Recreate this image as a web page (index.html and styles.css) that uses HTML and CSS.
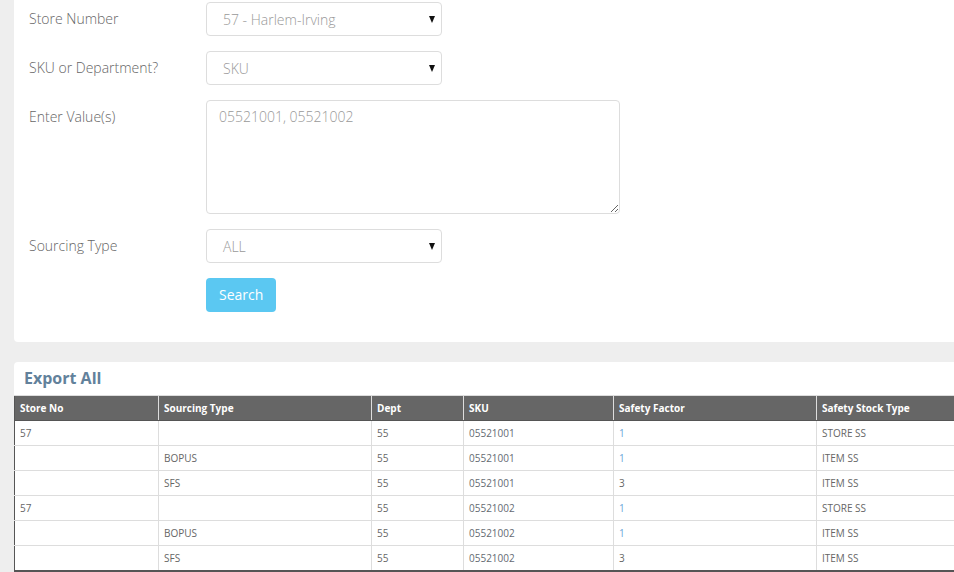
FILE: index.html
```html
<!DOCTYPE html>
<html>
<head>
<meta charset="utf-8">
<link rel="stylesheet" href="styles.css">
</head>
<body>
<div class="page">
  <section class="card form-card">
    <div class="form-row">
      <label class="label">Store Number</label>
      <div class="select"><span>57 - Harlem-Irving</span><span class="caret"></span></div>
    </div>
    <div class="form-row">
      <label class="label">SKU or Department?</label>
      <div class="select"><span>SKU</span><span class="caret"></span></div>
    </div>
    <div class="form-row">
      <label class="label">Enter Value(s)</label>
      <textarea class="textarea" placeholder="05521001, 05521002"></textarea>
    </div>
    <div class="form-row">
      <label class="label">Sourcing Type</label>
      <div class="select"><span>ALL</span><span class="caret"></span></div>
    </div>
    <div class="form-row">
      <span class="label"></span>
      <button class="btn">Search</button>
    </div>
  </section>
  <section class="card table-card">
    <h2 class="export">Export All</h2>
    <table class="grid">
      <colgroup>
        <col class="c1"><col class="c2"><col class="c3"><col class="c4"><col class="c5"><col class="c6">
      </colgroup>
      <thead>
        <tr><th>Store No</th><th>Sourcing Type</th><th>Dept</th><th>SKU</th><th>Safety Factor</th><th>Safety Stock Type</th></tr>
      </thead>
      <tbody>
        <tr><td>57</td><td></td><td>55</td><td class="sku">05521001</td><td class="num">1</td><td>STORE SS</td></tr>
        <tr><td></td><td>BOPUS</td><td>55</td><td class="sku">05521001</td><td class="num">1</td><td>ITEM SS</td></tr>
        <tr><td></td><td>SFS</td><td>55</td><td class="sku">05521001</td><td>3</td><td>ITEM SS</td></tr>
        <tr><td>57</td><td></td><td>55</td><td class="sku">05521002</td><td class="num">1</td><td>STORE SS</td></tr>
        <tr><td></td><td>BOPUS</td><td>55</td><td class="sku">05521002</td><td class="num">1</td><td>ITEM SS</td></tr>
        <tr><td></td><td>SFS</td><td>55</td><td class="sku">05521002</td><td>3</td><td>ITEM SS</td></tr>
      </tbody>
    </table>
  </section>
</div>
</body>
</html>
```
FILE: styles.css
```css
html, body {
  margin: 0;
  padding: 0;
  background: #eeeeee;
  overflow: hidden;
  font-family: "Open Sans", "Liberation Sans", sans-serif;
}
.page {
  width: 1000px;
  padding-left: 14px;
}
.card {
  background: #ffffff;
}
.form-card {
  border-radius: 0 0 4px 4px;
  padding: 2px 0 30px 15px;
  display: flex;
  flex-direction: column;
  gap: 15px;
}
.form-row {
  display: flex;
  align-items: flex-start;
}
.label {
  width: 177px;
  flex: none;
  font-size: 14px;
  font-weight: 300;
  line-height: 34px;
  color: #666666;
}
.select {
  width: 236px;
  height: 34px;
  box-sizing: border-box;
  border: 1px solid #dddddd;
  border-radius: 4px;
  display: flex;
  align-items: center;
  justify-content: space-between;
  padding: 0 6px 0 16px;
  font-size: 14px;
  font-weight: 300;
  color: #999999;
}
.caret {
  width: 0;
  height: 0;
  border-left: 3.5px solid transparent;
  border-right: 3.5px solid transparent;
  border-top: 7px solid #111111;
}
.textarea {
  width: 414px;
  height: 114px;
  box-sizing: border-box;
  border: 1px solid #dddddd;
  border-radius: 4px;
  padding: 6px 12px;
  font-family: "Open Sans", "Liberation Sans", sans-serif;
  font-size: 14px;
  font-weight: 300;
  line-height: 20px;
  color: #999999;
  margin: 0;
  outline: none;
}
.textarea::placeholder {
  color: #999999;
}
.btn {
  height: 34px;
  padding: 0 13px 1px;
  border: none;
  border-radius: 4px;
  background: #5bc8f2;
  color: #ffffff;
  font-family: "Open Sans", "Liberation Sans", sans-serif;
  font-size: 14px;
}
.table-card {
  margin-top: 20px;
  border-radius: 4px 4px 0 0;
  padding-top: 4px;
}
.export {
  margin: 0;
  padding-left: 10px;
  font-size: 16px;
  line-height: 24px;
  height: 29px;
  font-weight: 700;
  color: #62819b;
}
.grid {
  width: 987px;
  border-collapse: collapse;
  table-layout: fixed;
  font-size: 10px;
  border-left: 1px solid #555555;
  border-bottom: 2px solid #555555;
}
.c1 { width: 144px; }
.c2 { width: 213px; }
.c3 { width: 92px; }
.c4 { width: 150px; }
.c5 { width: 203px; }
.c6 { width: 185px; }
.grid th {
  background: #666666;
  color: #ffffff;
  font-weight: 700;
  text-align: left;
  height: 24px;
  padding: 0 5px;
  border-top: 1px solid #dddddd;
  border-left: 1px solid #dddddd;
  border-bottom: 1px solid #555555;
}
.grid th:first-child {
  border-left: none;
}
.grid td {
  height: 24px;
  padding: 0 5px;
  color: #666666;
  border-left: 1px solid #dddddd;
  border-top: 1px solid #dddddd;
}
.grid td:first-child {
  border-left: none;
}
.grid tbody tr:first-child td {
  border-top: none;
}
.grid td.sku {
  color: #646a72;
}
.grid td.num {
  color: #6aa6d8;
}
```
